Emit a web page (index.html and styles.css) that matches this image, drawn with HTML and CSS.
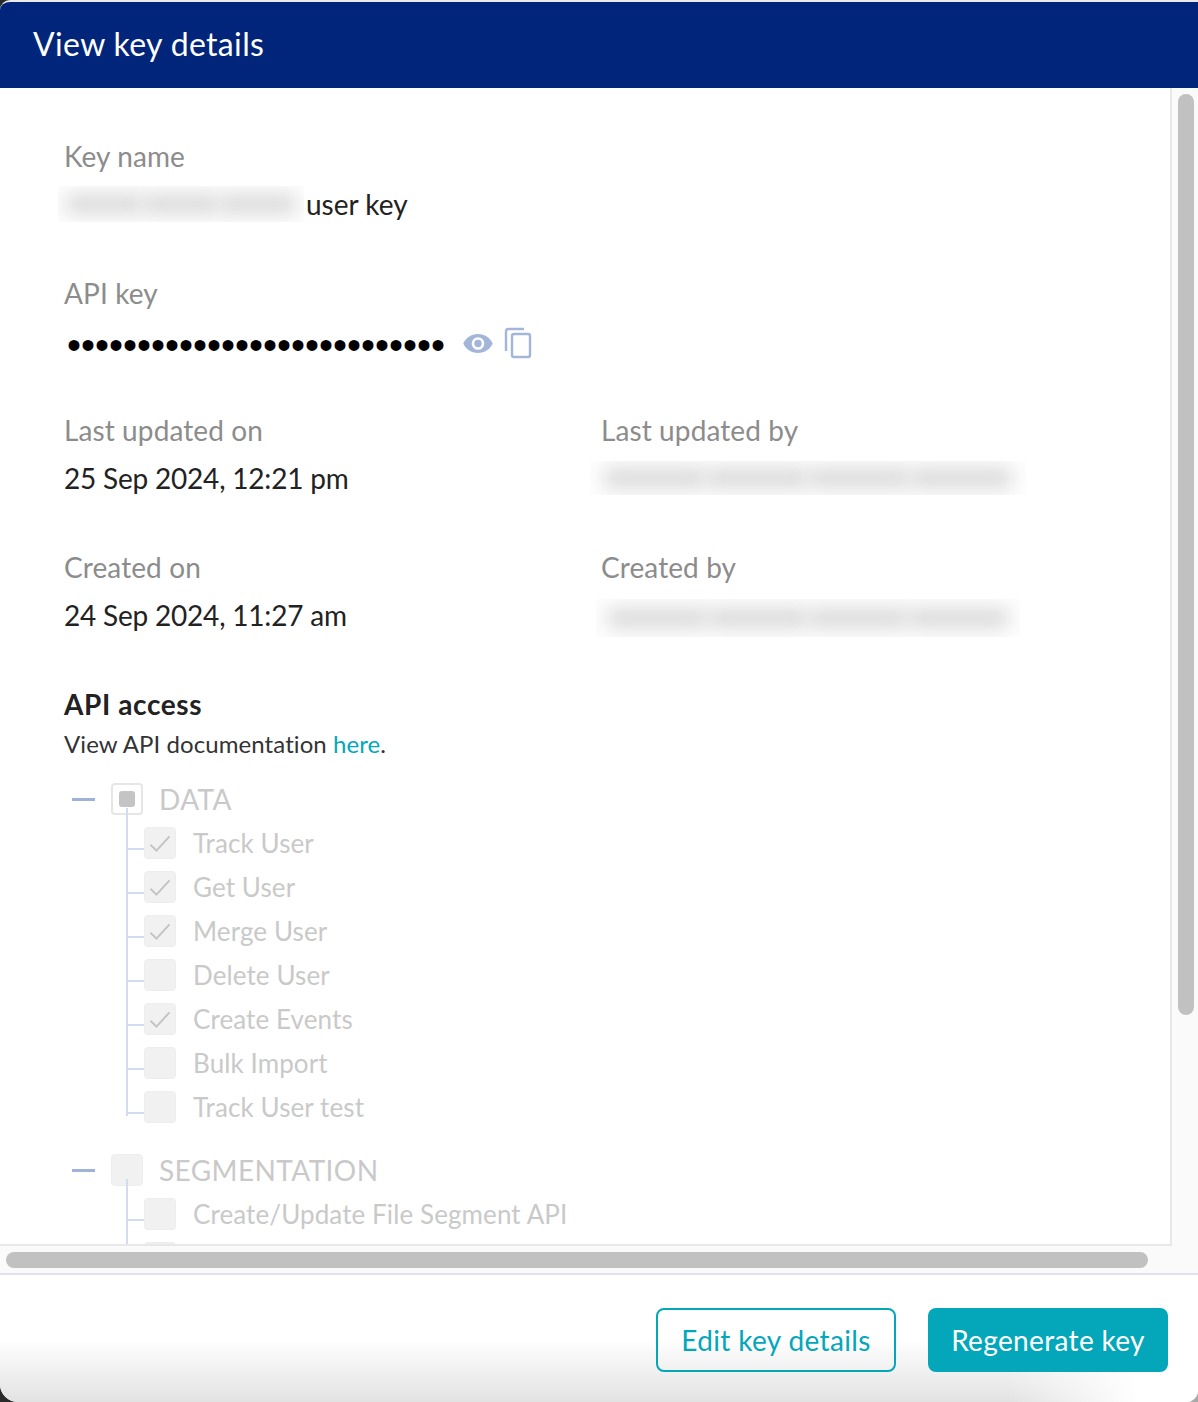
FILE: index.html
```html
<!DOCTYPE html>
<html lang="en">
<head>
<meta charset="utf-8">
<title>View key details</title>
<link rel="stylesheet" href="styles.css">
</head>
<body>
<div class="modal">
  <header class="modal-header">View key details</header>
  <div class="scroll-area">
    <div class="scroll-row">
      <main class="content">
        <section class="group">
          <div class="label">Key name</div>
          <div class="value key-name"><span class="redact redact-name"><i></i><i></i><i></i></span>user key</div>
        </section>
        <section class="group">
          <div class="label">API key</div>
          <div class="value key-line">
            <span class="dots">•••••••••••••••••••••••••••</span>
            <svg class="eye" viewBox="0 0 30 20" width="32" height="21"><path fill="#a3b6d9" fill-rule="evenodd" d="M15 1C8.500 1 3.200 4.800 1 10c2.200 5.200 7.500 9 14 9s11.800-3.800 14-9C26.800 4.800 21.500 1 15 1zm0 15a6 6 0 1 1 0-12 6 6 0 0 1 0 12zm0-9.500a3.500 3.500 0 1 0 0 7 3.500 3.500 0 0 0 0-7z"/></svg>
            <svg class="copy" viewBox="0 0 28 32" width="28" height="32"><path fill="none" stroke="#a3b6d9" stroke-width="2.400" stroke-linejoin="round" d="M20 2H4a2 2 0 0 0-2 2v20"/><rect x="8" y="7" width="18" height="23" rx="2" fill="none" stroke="#a3b6d9" stroke-width="2.400"/></svg>
          </div>
        </section>
        <section class="group two-col">
          <div>
            <div class="label">Last updated on</div>
            <div class="value date">25 Sep 2024, 12:21 pm</div>
          </div>
          <div>
            <div class="label">Last updated by</div>
            <div class="redact-wrap"><span class="redact redact-email-a"><i></i><i></i><i></i><i></i></span></div>
          </div>
        </section>
        <section class="group two-col">
          <div>
            <div class="label">Created on</div>
            <div class="value date">24 Sep 2024, 11:27 am</div>
          </div>
          <div>
            <div class="label">Created by</div>
            <div class="redact-wrap"><span class="redact redact-email-b"><i></i><i></i><i></i><i></i></span></div>
          </div>
        </section>
        <h2 class="access-title">API access</h2>
        <p class="access-doc">View API documentation <a href="#">here</a>.</p>

        <div class="tree">
          <div class="tree-parent">
            <span class="dash"></span>
            <span class="box box-outline"><span class="indeterminate"></span></span>
            <span class="tree-text parent-text">DATA</span>
          </div>
          <div class="tree-children">
            <div class="tree-child"><span class="box"><svg class="tick" viewBox="0 0 20 16"><path d="M2 9l5 5L18 2"/></svg></span><span class="tree-text">Track User</span></div>
            <div class="tree-child"><span class="box"><svg class="tick" viewBox="0 0 20 16"><path d="M2 9l5 5L18 2"/></svg></span><span class="tree-text">Get User</span></div>
            <div class="tree-child"><span class="box"><svg class="tick" viewBox="0 0 20 16"><path d="M2 9l5 5L18 2"/></svg></span><span class="tree-text">Merge User</span></div>
            <div class="tree-child"><span class="box"></span><span class="tree-text">Delete User</span></div>
            <div class="tree-child"><span class="box"><svg class="tick" viewBox="0 0 20 16"><path d="M2 9l5 5L18 2"/></svg></span><span class="tree-text">Create Events</span></div>
            <div class="tree-child"><span class="box"></span><span class="tree-text">Bulk Import</span></div>
            <div class="tree-child"><span class="box"></span><span class="tree-text">Track User test</span></div>
          </div>
        </div>
        <div class="tree tree-second">
          <div class="tree-parent">
            <span class="dash"></span>
            <span class="box"></span>
            <span class="tree-text parent-text">SEGMENTATION</span>
          </div>
          <div class="tree-children">
            <div class="tree-child"><span class="box"></span><span class="tree-text">Create/Update File Segment API</span></div>
            <div class="tree-child"><span class="box"></span></div>
          </div>
        </div>
      </main>
      <div class="v-scrollbar"><div class="v-thumb"></div></div>
    </div>
    <div class="h-scrollbar"><div class="h-thumb"></div></div>
  </div>
  <footer class="modal-footer">
    <button class="btn btn-outline" type="button">Edit key details</button>
    <button class="btn btn-solid" type="button">Regenerate key</button>
  </footer>
</div>
</body>
</html>
```
FILE: styles.css
```css
* { box-sizing: border-box; }
html, body { margin: 0; height: 100%; }
body {
  background: linear-gradient(to right, #2a2a2a 50%, #a8a8a8 50%);
  font-family: "Lato", "Liberation Sans", sans-serif;
  overflow: hidden;
}
.modal {
  width: 1198px;
  height: 1402px;
  display: flex;
  flex-direction: column;
  background: #fff;
  border-radius: 10px 0 12px 18px;
  overflow: hidden;
  border-top: 2px solid #ebebeb;
}
.modal-header {
  height: 86px;
  flex: none;
  background: #00257a;
  color: #fff;
  font-size: 32px;
  letter-spacing: .35px;
  line-height: 84px;
  padding-left: 33px;
}
.scroll-area {
  flex: none;
  height: 1187px;
  display: flex;
  flex-direction: column;
  background: #fafafa;
  border-bottom: 2px solid #dfe1ee;
}
.scroll-row {
  display: flex;
  height: 1158px;
  flex: none;
}
.content {
  width: 1172px;
  flex: none;
  height: 100%;
  overflow: hidden;
  background: #fff;
  border-right: 2px solid #e8e8e8;
  border-bottom: 2px solid #e8e8e8;
  padding: 50px 0 0 64px;
}
.v-scrollbar {
  flex: 1;
  padding: 6px 4px 0 6px;
}
.v-thumb {
  height: 921px;
  background: #c1c1c1;
  border-radius: 8px;
}
.h-scrollbar {
  flex: 1;
  padding: 6px 0 0 6px;
}
.h-thumb {
  width: 1142px;
  height: 16px;
  background: #c1c1c1;
  border-radius: 8px;
}
.group { margin-bottom: 53px; }
.two-col {
  display: grid;
  grid-template-columns: 537px 1fr;
}
.label {
  color: #8c8c8c;
  font-size: 28px;
  letter-spacing: .1px;
  line-height: 36px;
  height: 36px;
}
.value {
  color: #222;
  font-size: 28px;
  line-height: 36px;
  height: 36px;
  margin-top: 12px;
  white-space: nowrap;
}
.date { letter-spacing: -.2px; }
.key-name { display: flex; align-items: center; }
.key-line { display: flex; align-items: center; }
.dots {
  color: #000;
  font-family: "Liberation Sans", sans-serif;
  font-size: 40px;
  line-height: 36px;
  height: 36px;
  width: 395px;
  flex: none;
  margin: 7px 0 0 3px;
}
.eye { flex: none; margin: 5px 10px 0 0; }
.copy { flex: none; margin-top: 4px; }
.redact {
  display: flex;
  flex: none;
  overflow: hidden;
  background: #fdfdfd;
  align-items: center;
}
.redact i {
  display: block;
  height: 20px;
  background: #dadada;
  filter: blur(9px);
  flex: 1;
  border-radius: 6px;
}
.redact-name {
  width: 246px;
  height: 36px;
  margin-left: -6px;
  margin-right: 2px;
  padding: 0 8px;
}
.redact-wrap { margin-top: 12px; height: 36px; display: flow-root; }
.redact-email-a { width: 436px; height: 34px; margin: 1px 0 0 -11px; padding: 0 14px; }
.redact-email-b { width: 424px; height: 38px; margin: 2px 0 0 -5px; padding: 0 12px; }
.access-title {
  margin: 0;
  color: #222;
  font-size: 28px;
  letter-spacing: .6px;
  line-height: 36px;
  font-weight: 700;
}
.access-doc {
  margin: 4px 0 15px;
  color: #333;
  font-size: 24px;
  letter-spacing: .08px;
  line-height: 36px;
}
.access-doc a { color: #03a7b9; text-decoration: none; }
.tree { margin-left: 8px; }
.tree-second { margin-top: 19px; }
.tree-parent {
  display: flex;
  align-items: center;
  height: 44px;
}
.dash {
  width: 23px;
  height: 3px;
  background: #9fb3d8;
  margin-right: 16px;
  flex: none;
}
.box {
  width: 32px;
  height: 32px;
  flex: none;
  display: flex;
  align-items: center;
  justify-content: center;
  background: #f1f1f1;
  border: 1px solid #ededed;
  border-radius: 4px;
}
.box-outline {
  background: #fff;
  border: 2px solid #e6e6e6;
}
.indeterminate {
  width: 16px;
  height: 16px;
  border-radius: 3px;
  background: #c4c4c4;
}
.tick {
  width: 24px;
  height: 19px;
  fill: none;
  stroke: #c4c4c4;
  stroke-width: 1.700;
}
.tree-text {
  color: #c9c9c9;
  font-size: 26px;
  letter-spacing: .1px;
  margin-left: 17px;
  white-space: nowrap;
}
.parent-text {
  font-size: 28px;
  letter-spacing: .4px;
  margin-left: 16px;
}
.tree-children {
  position: relative;
  padding-left: 72px;
}
.tree-children::before {
  content: "";
  position: absolute;
  left: 54px;
  top: -13px;
  bottom: 13px;
  width: 2px;
  background: #d3dcee;
}
.tree-child {
  position: relative;
  display: flex;
  align-items: center;
  height: 44px;
}
.tree-child::before {
  content: "";
  position: absolute;
  left: -18px;
  top: 27px;
  width: 18px;
  height: 2px;
  background: #d3dcee;
}
.modal-footer {
  flex: 1;
  display: flex;
  justify-content: flex-end;
  gap: 32px;
  padding: 33px 30px 0 0;
  background:
    linear-gradient(to right, rgba(255,255,255,0) 84%, #fff 95%),
    linear-gradient(to bottom, #fff 0%, #fff 50%, #e2e2e2 100%);
}
.btn {
  width: 240px;
  height: 64px;
  border-radius: 8px;
  font-family: inherit;
  font-size: 28px;
  letter-spacing: .35px;
}
.btn-outline {
  background: transparent;
  border: 2px solid #03a7b9;
  color: #03a7b9;
}
.btn-solid {
  background: #03a7b9;
  border: none;
  color: #fff;
}
```
